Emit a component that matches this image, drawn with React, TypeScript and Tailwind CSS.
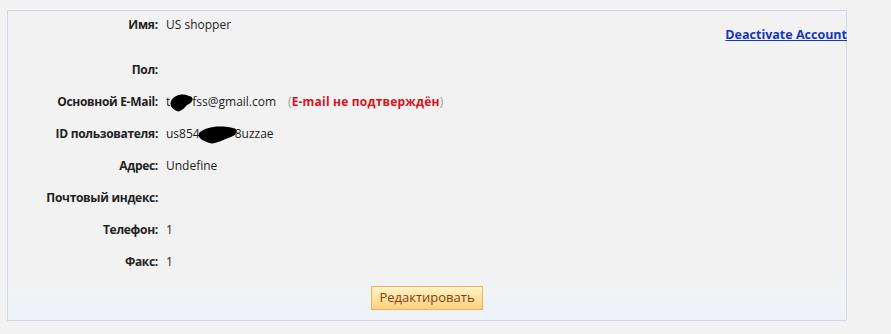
import React from "react";

const Blob: React.FC<{ w: number; className?: string }> = ({ w, className }) => (
  <svg width={w} height={22} viewBox={`0 0 ${w} 22`} className={`inline-block align-middle ${className ?? ""}`}>
    <path
      d={`M2 10 C ${w * 0.2} 4, ${w * 0.5} 2, ${w - 6} 5 C ${w} 6, ${w - 2} 12, ${w - 8} 14 C ${w * 0.6} 17, ${w * 0.4} 22, ${w * 0.3} 20 C ${w * 0.15} 18, 0 15, 2 10 Z`}
      fill="#000"
    />
  </svg>
);

const rows: { label: string; value?: React.ReactNode }[] = [
  { label: "Пол:" },
  {
    label: "Основной E-Mail:",
    value: (
      <span className="inline-flex items-center">
        <span>t</span>
        <Blob w={26} className="-ml-[1px] -mr-[3px]" />
        <span>fss@gmail.com</span>
        <span className="ml-[12px] text-[#999]">(</span>
        <span className="font-bold tracking-[0.2px] text-[#d8121b]">E-mail не подтверждён</span>
        <span className="text-[#999]">)</span>
      </span>
    ),
  },
  {
    label: "ID пользователя:",
    value: (
      <span className="inline-flex items-center">
        <span>us854</span>
        <Blob w={42} className="-ml-[3px] -mr-[4px]" />
        <span>8uzzae</span>
      </span>
    ),
  },
  { label: "Адрес:", value: "Undefine" },
  { label: "Почтовый индекс:" },
  { label: "Телефон:", value: "1" },
  { label: "Факс:", value: "1" },
];

export default function App() {
  return (
    <div
      className="h-[334px] w-[891px] bg-[#f2f2f2] pt-[10px] pl-[7px] text-[12px] text-[#222]"
      style={{ fontFamily: '"Open Sans", "Noto Sans", sans-serif' }}
    >
      <div className="w-[840px] border border-[#d3d8e8] bg-[#f2f2f2]">
        <div className="flex h-[43px]">
          <div className="flex w-[150px] justify-end pt-[5px] font-bold tracking-[-0.2px]">Имя:</div>
          <div className="pl-[8px] pt-[5px]">US shopper</div>
          <a href="#" className="ml-auto -mr-[1px] mt-[15px] self-start text-[12.5px] font-bold text-[#1236c4] underline">
            Deactivate Account
          </a>
        </div>
        {rows.map((r) => (
          <div key={r.label} className="flex h-[32px] items-center">
            <div className="w-[150px] text-right font-bold tracking-[-0.3px]">{r.label}</div>
            <div className="pl-[8px]">{r.value}</div>
          </div>
        ))}
        <div className="flex h-[42px] justify-center bg-gradient-to-b from-[#f2f2f2] to-[#eef3f9] pt-[8px]">
          <button className="h-[24px] w-[112px] border border-[#eab35a] bg-gradient-to-b from-[#fff4c8] to-[#fdd27a] text-[13px] text-[#8a3a12]">
            Редактировать
          </button>
        </div>
      </div>
    </div>
  );
}
